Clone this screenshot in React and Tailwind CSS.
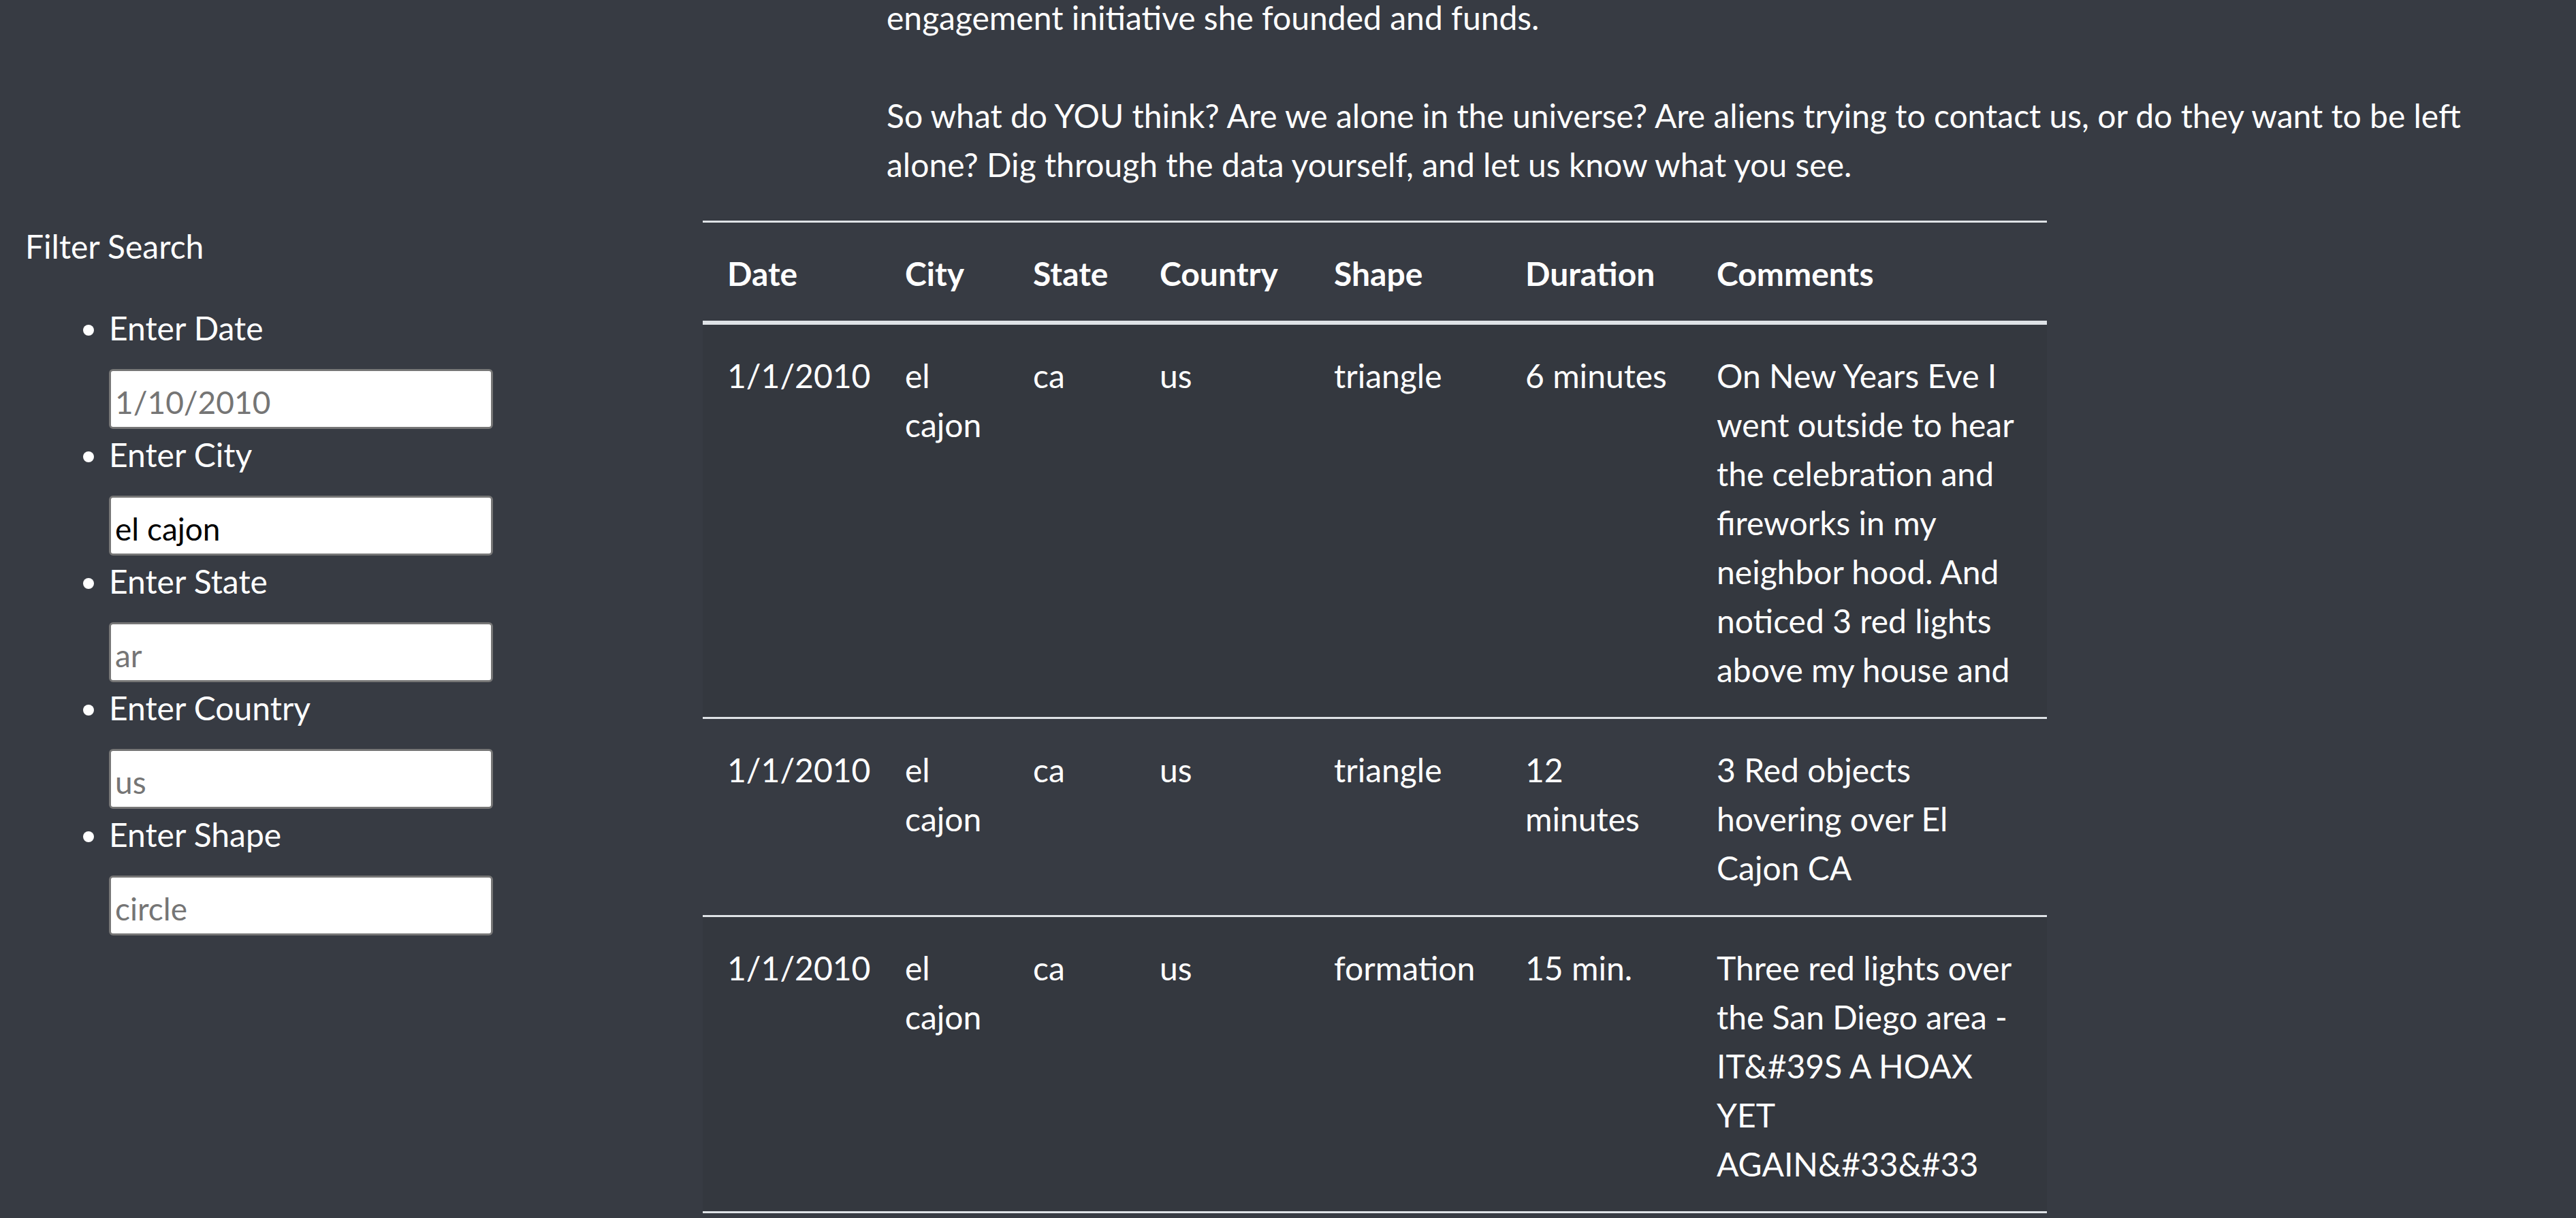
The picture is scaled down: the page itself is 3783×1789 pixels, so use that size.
import React from "react";

const cols = [
  { name: "Date", w: "w-[261px]" },
  { name: "City", w: "w-[188px]" },
  { name: "State", w: "w-[186px]" },
  { name: "Country", w: "w-[256px]" },
  { name: "Shape", w: "w-[281px]" },
  { name: "Duration", w: "w-[281px]" },
  { name: "Comments", w: "w-[521px]" },
];

const rows = [
  [
    ["1/1/2010"],
    ["el", "cajon"],
    ["ca"],
    ["us"],
    ["triangle"],
    ["6 minutes"],
    [
      "On New Years Eve I",
      "went outside to hear",
      "the celebration and",
      "fireworks in my",
      "neighbor hood. And",
      "noticed 3 red lights",
      "above my house and",
    ],
  ],
  [
    ["1/1/2010"],
    ["el", "cajon"],
    ["ca"],
    ["us"],
    ["triangle"],
    ["12", "minutes"],
    ["3 Red objects", "hovering over El", "Cajon CA"],
  ],
  [
    ["1/1/2010"],
    ["el", "cajon"],
    ["ca"],
    ["us"],
    ["formation"],
    ["15 min."],
    [
      "Three red lights over",
      "the San Diego area -",
      "IT&#39S A HOAX",
      "YET",
      "AGAIN&#33&#33",
    ],
  ],
];

const filters = [
  { label: "Enter Date", placeholder: "1/10/2010" },
  { label: "Enter City", value: "el cajon" },
  { label: "Enter State", placeholder: "ar" },
  { label: "Enter Country", placeholder: "us" },
  { label: "Enter Shape", placeholder: "circle" },
];

function Lines({ lines }) {
  return (
    <>
      {lines.map((l, i) => (
        <div key={i} className="whitespace-nowrap">
          {l}
        </div>
      ))}
    </>
  );
}

export default function App() {
  return (
    <div className="w-[3783px] h-[1789px] overflow-hidden bg-[#373b43] text-white font-['Lato',sans-serif] text-[48px] leading-[72px]">
      <div className="ml-[1302px] mt-[-10px] mb-[46px]">
        <div className="whitespace-nowrap">engagement initiative she founded and funds.</div>
        <div className="h-[72px]"></div>
        <div className="whitespace-nowrap">
          So what do YOU think? Are we alone in the universe? Are aliens trying to contact us, or do they want to be left
        </div>
        <div className="whitespace-nowrap">
          alone? Dig through the data yourself, and let us know what you see.
        </div>
      </div>

      <div className="flex items-start">
        <div className="w-[1032px] shrink-0 pl-[37px]">
          <p className="mb-[48px] pt-[2px]">Filter Search</p>
          <ul className="list-disc pl-[123px]">
            {filters.map((f) => (
              <li key={f.label}>
                <label>{f.label}</label>
                <input
                  type="text"
                  readOnly
                  defaultValue={f.value}
                  placeholder={f.placeholder}
                  className="block mt-[24px] mb-[2px] w-[564px] h-[88px] bg-white text-black text-[46px] leading-[56px] pt-[8px] px-[6px] border-[3px] border-[#767676] rounded-[6px] placeholder:text-[#757575] outline-none font-['Lato',sans-serif]"
                />
              </li>
            ))}
          </ul>
        </div>

        <table className="w-[1974px] table-fixed border-collapse shrink-0">
          <thead>
            <tr>
              {cols.map((c) => (
                <th
                  key={c.name}
                  className={`${c.w} text-left font-bold align-bottom px-[36px] pt-[39px] pb-[33px] border-t-[3px] border-b-[6px] border-[#dee2e6]`}
                >
                  {c.name}
                </th>
              ))}
            </tr>
          </thead>
          <tbody>
            {rows.map((r, i) => (
              <tr key={i} className={i % 2 === 0 ? "bg-black/5" : ""}>
                {r.map((cell, j) => (
                  <td key={j} className="align-top px-[36px] pt-[39px] pb-[33px] border-t-[3px] border-[#dee2e6]">
                    <Lines lines={cell} />
                  </td>
                ))}
              </tr>
            ))}
            <tr>
              {cols.map((c) => (
                <td key={c.name} className="h-[144px] p-[36px] border-t-[3px] border-[#dee2e6]"></td>
              ))}
            </tr>
          </tbody>
        </table>
      </div>
    </div>
  );
}
